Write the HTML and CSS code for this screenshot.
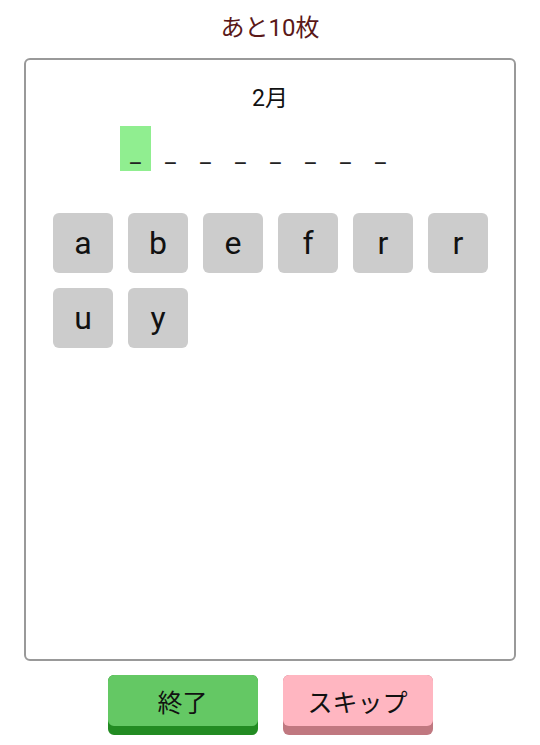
FILE: index.html
```html
<!DOCTYPE html>
<html lang="ja">
  <head>
    <meta charset="UTF-8" />
    <meta name="viewport" content="width=device-width, initial-scale=1.0" />
    <title>単語カード</title>
    <link rel="stylesheet" href="styles.css">
  </head>
  <body>
    <div class="remaining">あと10枚</div>

    <!-- Card -->
    <div class="card">
      <div class="hint">2月</div>
      <div class="answer">
        <span class="slot current">_</span>
        <span class="slot">_</span>
        <span class="slot">_</span>
        <span class="slot">_</span>
        <span class="slot">_</span>
        <span class="slot">_</span>
        <span class="slot">_</span>
        <span class="slot">_</span>
      </div>
      <div class="letters">
        <button class="letter">a</button>
        <button class="letter">b</button>
        <button class="letter">e</button>
        <button class="letter">f</button>
        <button class="letter">r</button>
        <button class="letter">r</button>
        <button class="letter">u</button>
        <button class="letter">y</button>
      </div>
    </div>

    <!-- Actions -->
    <div class="actions">
      <button class="action finish"><span class="face">終了</span></button>
      <button class="action skip"><span class="face">スキップ</span></button>
    </div>
  </body>
</html>
```

FILE: styles.css
```css
body {
  margin: 0;
  font-family: Roboto, "Noto Sans CJK JP", sans-serif;
  color: #111;
  background: #fff;
}

.remaining {
  height: 58px;
  line-height: 56px;
  text-align: center;
  font-size: 24px;
  color: #5a1818;
}

/* Card */
.card {
  margin: 0 24px;
  height: 599px;
  border: 2px solid #999;
  border-radius: 6px;
}

.hint {
  margin-top: 24px;
  text-align: center;
  font-size: 23px;
  line-height: 30px;
}

.answer {
  display: flex;
  justify-content: center;
  gap: 4px;
  margin-top: 12px;
  padding-right: 24px;
}

.slot {
  width: 31px;
  height: 45px;
  display: flex;
  align-items: flex-end;
  justify-content: center;
  font-size: 24px;
  line-height: 33px;
  color: #222;
}

.slot.current {
  background-color: #90ee90;
}

.letters {
  display: flex;
  flex-wrap: wrap;
  gap: 15px;
  padding: 42px 26px 0 27px;
}

.letter {
  width: 60px;
  height: 60px;
  border: none;
  border-radius: 6px;
  background-color: #ccc;
  font-family: Roboto, sans-serif;
  font-size: 32px;
  color: #111;
  padding: 0;
}

/* Action buttons */
.actions {
  display: flex;
  justify-content: center;
  gap: 25px;
  margin-top: 14px;
}

.action {
  width: 150px;
  height: 60px;
  border: none;
  border-radius: 6px;
  padding: 0 0 9px;
  display: flex;
}

.action .face {
  flex: 1;
  display: flex;
  align-items: center;
  justify-content: center;
  border-radius: 6px;
  font-family: "Noto Sans CJK JP", sans-serif;
  font-size: 25px;
  color: #111;
}

.finish {
  background-color: #228b22;
}

.finish .face {
  background-color: #64c864;
}

.skip {
  background-color: #c07880;
}

.skip .face {
  background-color: #ffb6c1;
}
```
